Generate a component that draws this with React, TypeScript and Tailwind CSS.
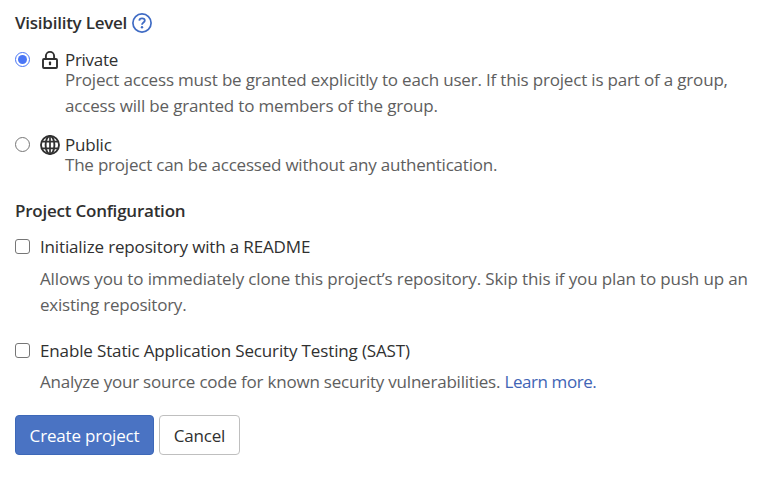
import React from "react";

function HelpIcon() {
  return (
    <svg width="20" height="20" viewBox="0 0 20 20" fill="none" stroke="#3f6bc4">
      <circle cx="10" cy="10" r="9.1" strokeWidth="1.7" />
      <path d="M7.3 7.6C7.4 6.1 8.5 5.3 10 5.3c1.6 0 2.8.9 2.8 2.3 0 2-2.8 1.9-2.8 4.2" strokeWidth="1.8" />
      <circle cx="10" cy="14.3" r="1.2" fill="#3f6bc4" stroke="none" />
    </svg>
  );
}

function LockIcon() {
  return (
    <svg width="20" height="20" viewBox="0 0 20 20" fill="none" stroke="#303030" strokeWidth="1.9">
      <rect x="3" y="9" width="14" height="9" rx="1" />
      <path d="M5.9 9V6a4.1 4.1 0 0 1 8.2 0V9" />
      <rect x="8.9" y="11.6" width="2.2" height="3.6" rx=".6" fill="#303030" stroke="none" />
    </svg>
  );
}

function GlobeIcon() {
  return (
    <svg width="20" height="20" viewBox="0 0 20 20" fill="none" stroke="#303030" strokeWidth="1.9">
      <circle cx="10" cy="10" r="9" />
      <ellipse cx="10" cy="10" rx="4.4" ry="9" />
      <path d="M10 1v18M2 6.6h16M2 13.4h16" strokeWidth="1.7" />
    </svg>
  );
}

function Radio({ checked = false }: { checked?: boolean }) {
  return (
    <span
      role="radio"
      aria-checked={checked}
      className={`flex size-[15px] shrink-0 items-center justify-center rounded-full border ${checked ? "border-[#4a76f5]" : "border-[#767676]"}`}
    >
      {checked && <span className="size-[9px] rounded-full bg-[#4a76f5]" />}
    </span>
  );
}

function Checkbox() {
  return (
    <span
      role="checkbox"
      aria-checked={false}
      className="block size-[15px] shrink-0 rounded-[3px] border border-[#767676]"
    />
  );
}

export default function App() {
  return (
    <main className="h-[481px] w-[783px] overflow-hidden bg-white px-[15px] pt-[10px] font-['Open_Sans','Noto_Sans',sans-serif] text-[17px] leading-[26px] whitespace-nowrap text-[#303030]">
      <div className="flex h-[26px] gap-[5px]">
        <h2 className="w-[112px] font-semibold tracking-[-0.25px]">Visibility Level</h2>
        <div className="pt-[3px]"><HelpIcon /></div>
      </div>

      <section className="mt-[11px]">
        <div className="flex h-5">
          <div className="w-[25px] pt-[5px]"><Radio checked /></div>
          <div className="w-[25px] pt-[3px]"><LockIcon /></div>
          <span className="tracking-[-0.3px]">Private</span>
        </div>
        <div className="pl-[50px] text-[#5e5e5e]">
          <p className="tracking-[-0.18px]">Project access must be granted explicitly to each user. If this project is part of a group,</p>
          <p className="tracking-[-0.17px]">access will be granted to members of the group.</p>
        </div>
      </section>

      <section className="mt-[13px]">
        <div className="flex h-5">
          <div className="w-[25px] pt-[5px]"><Radio /></div>
          <div className="w-[25px] pt-[3px]"><GlobeIcon /></div>
          <span className="tracking-[-0.2px]">Public</span>
        </div>
        <p className="pl-[50px] tracking-[-0.215px] text-[#5e5e5e]">The project can be accessed without any authentication.</p>
      </section>

      <h2 className="mt-5 font-semibold tracking-[-0.23px]">Project Configuration</h2>

      <section className="mt-[10px]">
        <div className="flex h-[26px]">
          <div className="w-[25px] pt-[5px]"><Checkbox /></div>
          <span className="tracking-[-0.15px]">Initialize repository with a README</span>
        </div>
        <div className="mt-1.5 pl-[25px] text-[#5e5e5e]">
          <p className="tracking-[-0.135px]">Allows you to immediately clone this project’s repository. Skip this if you plan to push up an</p>
          <p className="tracking-[-0.23px]">existing repository.</p>
        </div>
      </section>

      <section className="mt-5">
        <div className="flex h-[26px]">
          <div className="w-[25px] pt-[5px]"><Checkbox /></div>
          <span className="tracking-[-0.14px]">Enable Static Application Security Testing (SAST)</span>
        </div>
        <p className="mt-[5px] pl-[25px] tracking-[-0.215px] text-[#5e5e5e]">
          Analyze your source code for known security vulnerabilities.{" "}
          <a className="tracking-[-0.42px] text-[#4164b5]">Learn more</a>
          <span className="text-[#4164b5]">.</span>
        </p>
      </section>

      <div className="mt-5 flex gap-[5px]">
        <button className="h-10 w-[139px] rounded-[4px] border border-[#3d68b8] bg-[#4a73c3] pt-0.5 tracking-[-0.18px] text-white">Create project</button>
        <button className="h-10 w-[81px] rounded-[4px] border border-[#bfbfbf] bg-white pt-0.5 tracking-[-0.18px]">Cancel</button>
      </div>
    </main>
  );
}
